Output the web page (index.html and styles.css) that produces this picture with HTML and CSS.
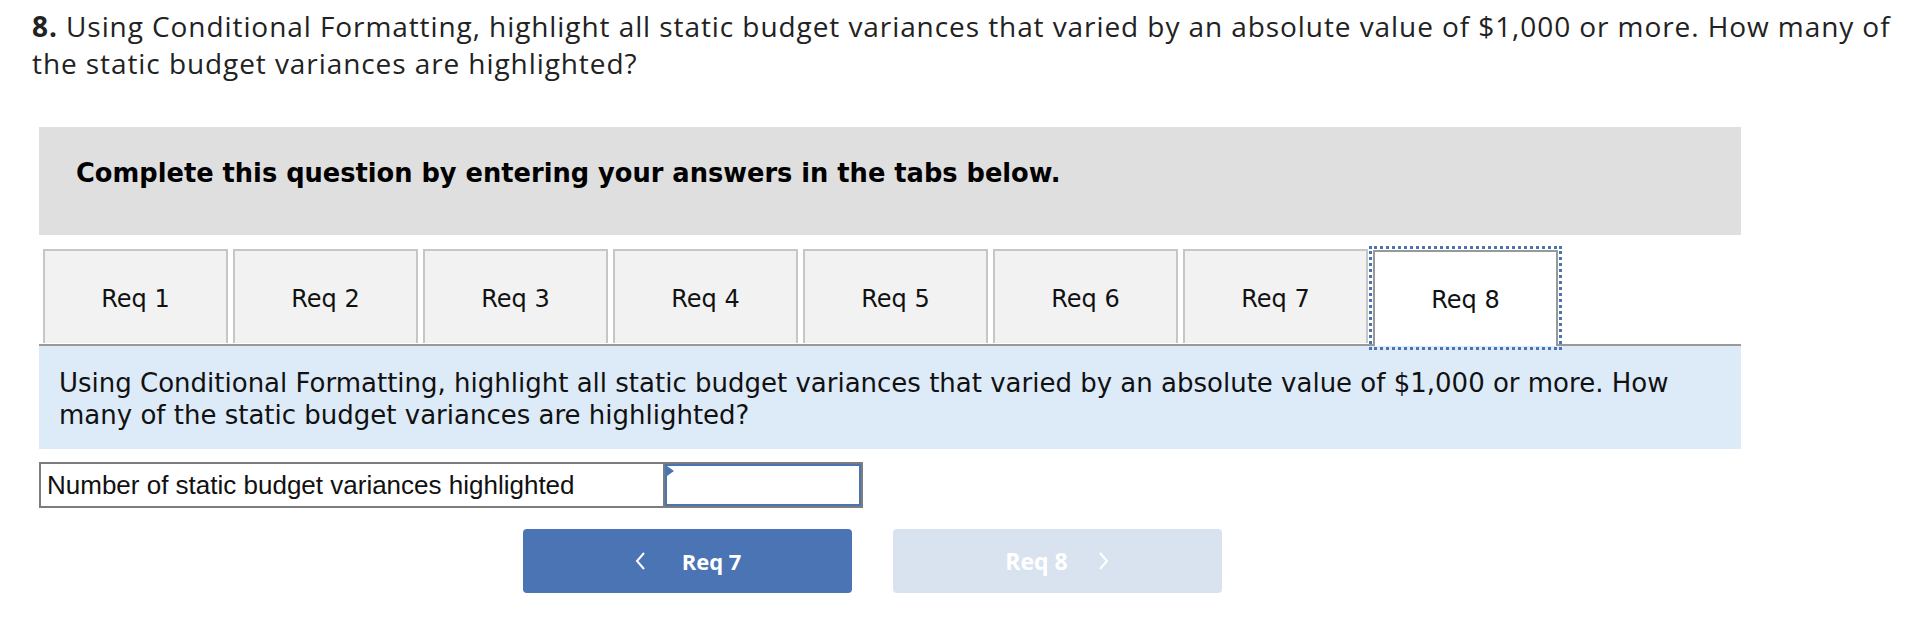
FILE: index.html
```html
<!DOCTYPE html>
<html>
<head>
<meta charset="utf-8">
<link rel="stylesheet" href="styles.css">
</head>
<body>
<div class="page">
  <p class="title"><b>8.</b> Using Conditional Formatting, highlight all static budget variances that varied by an absolute value of $1,000 or more. How many of the static budget variances are highlighted?</p>
  <div class="panel">
    <div class="instr">Complete this question by entering your answers in the tabs below.</div>
    <div class="tabs">
      <div class="tab">Req 1</div>
      <div class="tab">Req 2</div>
      <div class="tab">Req 3</div>
      <div class="tab">Req 4</div>
      <div class="tab">Req 5</div>
      <div class="tab">Req 6</div>
      <div class="tab">Req 7</div>
      <div class="tab active">Req 8</div>
    </div>
    <div class="qbox">Using Conditional Formatting, highlight all static budget variances that varied by an absolute value of $1,000 or more. How many of the static budget variances are highlighted?</div>
    <div class="answer">
      <div class="label">Number of static budget variances highlighted</div>
      <div class="input"></div>
    </div>
    <div class="nav">
      <div class="btn prev">
        <svg class="chev" width="12" height="20" viewBox="0 0 12 20"><path d="M10 2 L3 10 L10 18" fill="none" stroke="#fff" stroke-width="2"/></svg>
        <span>Req 7</span>
      </div>
      <div class="btn next">
        <span>Req 8</span>
        <svg class="chev" width="12" height="20" viewBox="0 0 12 20"><path d="M2 2 L9 10 L2 18" fill="none" stroke="#fff" stroke-width="2"/></svg>
      </div>
    </div>
  </div>
</div>
</body>
</html>
```

FILE: styles.css
```css
body {
  margin: 0;
  background: #fff;
}

.title {
  margin: 0;
  padding: 8px 0 0 32px;
  width: 1884px;
  font-family: "Open Sans", Lato, sans-serif;
  font-size: 28px;
  line-height: 37px;
  letter-spacing: 0.92px;
  color: #222;
}

.title b {
  font-weight: 700;
}

.panel {
  margin: 45px 0 0 39px;
  width: 1702px;
}

.instr {
  box-sizing: border-box;
  height: 108px;
  background: #dfdfdf;
  padding: 0 0 17px 37px;
  display: flex;
  align-items: center;
  font-family: "DejaVu Sans", Verdana, sans-serif;
  font-weight: bold;
  font-size: 25.7px;
  color: #000;
}

.tabs {
  margin-top: 14px;
  display: flex;
  gap: 5px;
  padding-left: 4px;
  border-bottom: 2px solid #999;
}

.tab {
  box-sizing: border-box;
  width: 185px;
  height: 94px;
  padding-top: 4px;
  border: 2px solid #c6c6c6;
  border-bottom: none;
  background: #f2f2f2;
  display: flex;
  align-items: center;
  justify-content: center;
  font-family: "DejaVu Sans", Verdana, sans-serif;
  font-size: 24px;
  color: #111;
}

.tab.active {
  height: 96px;
  margin-bottom: -2px;
  margin-top: 1px;
  background: #fff;
  border-color: #999;
  padding-top: 2px;
  outline: 3px dotted #4a74b4;
  outline-offset: 1px;
}

.qbox {
  background: #ddeaf7;
  padding: 21px 20px 18px 20px;
  font-family: "DejaVu Sans", Verdana, sans-serif;
  font-size: 26px;
  line-height: 32px;
  color: #111;
}

.answer {
  margin-top: 13px;
  display: flex;
  width: 824px;
  height: 46px;
  box-sizing: border-box;
  border: 2px solid #7d7d7d;
}

.label {
  width: 624px;
  box-sizing: border-box;
  border-right: 2px solid #7d7d7d;
  padding-left: 6px;
  display: flex;
  align-items: center;
  font-family: "Liberation Sans", Arial, sans-serif;
  font-size: 26px;
  color: #111;
}

.input {
  position: relative;
  flex: 1;
  border: 2px solid #4a74b4;
  background: #fff;
}

.input::before {
  content: "";
  position: absolute;
  left: 0;
  top: 0;
  border-left: 7px solid #4a74b4;
  border-top: 5px solid transparent;
  border-bottom: 5px solid transparent;
}

.nav {
  margin: 21px 0 0 484px;
  display: flex;
  gap: 41px;
}

.btn {
  width: 329px;
  height: 64px;
  border-radius: 4px;
  display: flex;
  align-items: center;
  justify-content: center;
  gap: 36px;
  font-family: "Open Sans", Roboto, sans-serif;
  font-weight: 700;
  font-size: 22px;
  color: #fff;
}

.btn.prev {
  background: #4a74b4;
}

.btn.next {
  background: #d9e3ef;
  gap: 30px;
}

.btn.next span {
  font-size: 23px;
}

.chev {
  display: block;
}
```
